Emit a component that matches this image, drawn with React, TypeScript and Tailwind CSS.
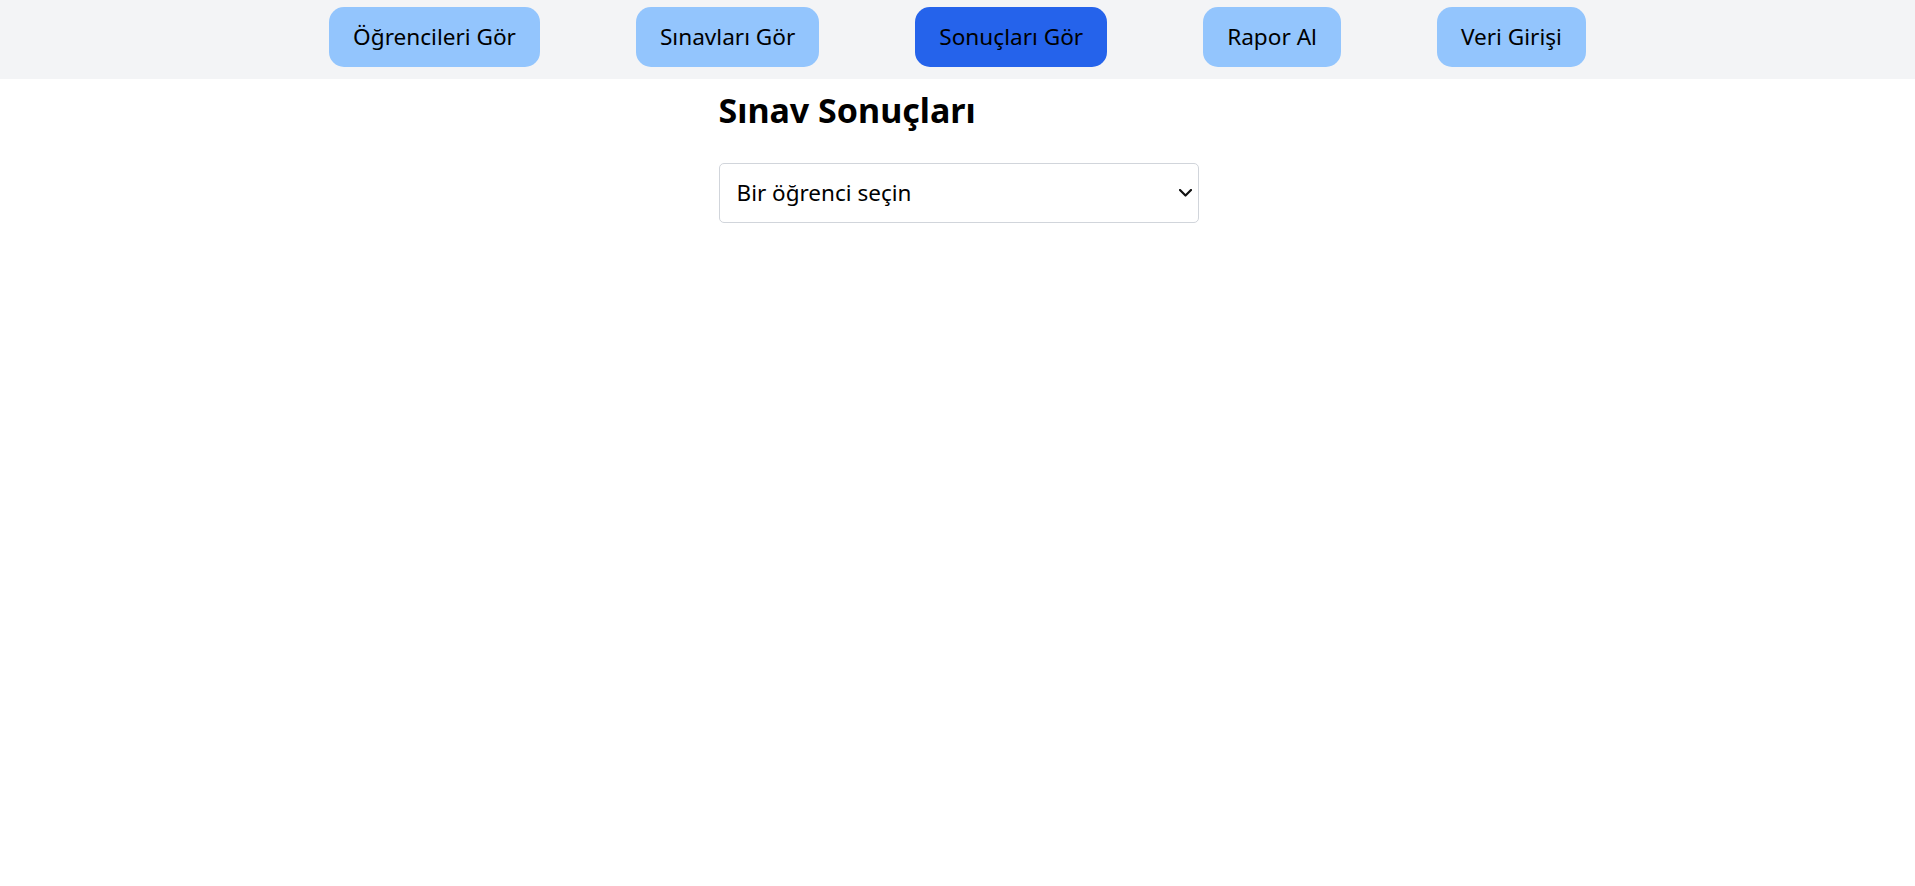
import { ReactNode } from "react";

type Sekme = {
  readonly label: string;
  readonly active?: boolean;
};

const sekmeler: Sekme[] = [
  { label: "Öğrencileri Gör" },
  { label: "Sınavları Gör" },
  { label: "Sonuçları Gör", active: true },
  { label: "Rapor Al" },
  { label: "Veri Girişi" },
];

function Navigasyon(): ReactNode {
  return (
    <nav className="flex h-[79px] justify-center gap-[96px] bg-[#f3f4f6] pt-[7px]">
      {sekmeler.map((sekme) => (
        <button
          key={sekme.label}
          type="button"
          className={
            sekme.active
              ? "h-[60px] rounded-[15px] bg-[#2563eb] px-6 text-[22.6px] leading-[28px] text-black"
              : "h-[60px] rounded-[15px] bg-[#93c5fd] px-6 text-[22.6px] leading-[28px] text-black"
          }
        >
          {sekme.label}
        </button>
      ))}
    </nav>
  );
}

function OgrenciSecimi(): ReactNode {
  return (
    <div className="relative">
      <select className="h-[60px] w-full appearance-none rounded-[5px] border border-[#d1d5db] bg-white pl-[17px] pr-10 text-[22.5px] text-black outline-none">
        <option>Bir öğrenci seçin</option>
      </select>
      {/* native ok yerine çizilen ok */}
      <svg
        className="pointer-events-none absolute right-[7px] top-[26px]"
        width="13"
        height="8"
        viewBox="0 0 13 8"
        fill="none"
      >
        <polyline
          points="1,1 6.5,6.5 12,1"
          stroke="#111"
          strokeWidth="2.2"
          strokeLinecap="round"
          strokeLinejoin="round"
        />
      </svg>
    </div>
  );
}

export default function App(): ReactNode {
  return (
    <div className="min-h-[886px] bg-white font-['Noto_Sans',sans-serif] text-black">
      <Navigasyon />
      <main className="mx-auto w-[480px] translate-x-[1px] pt-[11px]">
        <h1 className="mb-[33px] text-[34px] font-bold leading-[40px]">
          Sınav Sonuçları
        </h1>
        <OgrenciSecimi />
      </main>
    </div>
  );
}
